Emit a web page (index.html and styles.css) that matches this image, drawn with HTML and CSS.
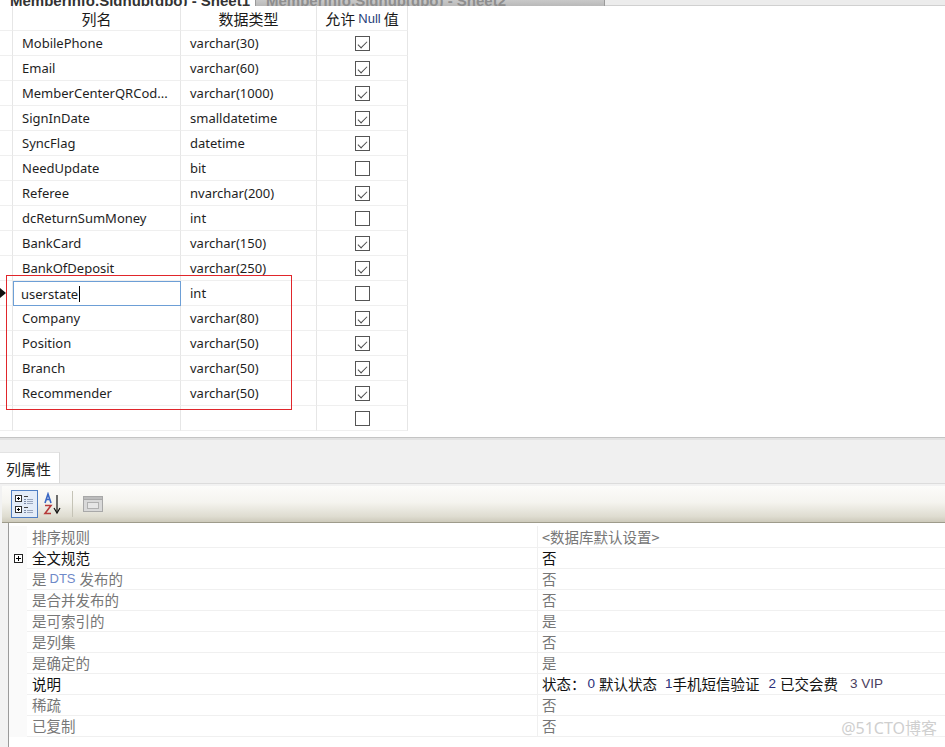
FILE: index.html
```html
<!DOCTYPE html>
<html lang="zh">
<head>
<meta charset="utf-8">
<title>表设计器</title>
<link rel="stylesheet" href="styles.css">
</head>
<body>
<div class="page">
  <div class="tab-strip">
    <div class="doc-tab active"><span>MemberInfo.Signup(dbo) - Sheet1</span></div>
    <div class="doc-tab other"><span>MemberInfo.Signup(dbo) - Sheet2</span></div>
    <div class="strip-rest"></div>
  </div>

  <div class="designer">
    <div class="grid">
      <div class="sel head"></div><div class="hc">列名</div><div class="hc">数据类型</div><div class="hc">允许 <span class="lat">Null</span> 值</div>

      <div class="sel"></div><div class="c">MobilePhone</div><div class="c">varchar(30)</div><div class="cb"><span class="box on"></span></div>
      <div class="sel"></div><div class="c">Email</div><div class="c">varchar(60)</div><div class="cb"><span class="box on"></span></div>
      <div class="sel"></div><div class="c">MemberCenterQRCod...</div><div class="c">varchar(1000)</div><div class="cb"><span class="box on"></span></div>
      <div class="sel"></div><div class="c">SignInDate</div><div class="c">smalldatetime</div><div class="cb"><span class="box on"></span></div>
      <div class="sel"></div><div class="c">SyncFlag</div><div class="c">datetime</div><div class="cb"><span class="box on"></span></div>
      <div class="sel"></div><div class="c">NeedUpdate</div><div class="c">bit</div><div class="cb"><span class="box"></span></div>
      <div class="sel"></div><div class="c">Referee</div><div class="c">nvarchar(200)</div><div class="cb"><span class="box on"></span></div>
      <div class="sel"></div><div class="c">dcReturnSumMoney</div><div class="c">int</div><div class="cb"><span class="box"></span></div>
      <div class="sel"></div><div class="c">BankCard</div><div class="c">varchar(150)</div><div class="cb"><span class="box on"></span></div>
      <div class="sel"></div><div class="c">BankOfDeposit</div><div class="c">varchar(250)</div><div class="cb"><span class="box on"></span></div>
      <div class="sel cur"><span class="arrow"></span></div><div class="c edit"><span>userstate</span><span class="caret"></span></div><div class="c">int</div><div class="cb"><span class="box"></span></div>
      <div class="sel"></div><div class="c">Company</div><div class="c">varchar(80)</div><div class="cb"><span class="box on"></span></div>
      <div class="sel"></div><div class="c">Position</div><div class="c">varchar(50)</div><div class="cb"><span class="box on"></span></div>
      <div class="sel"></div><div class="c">Branch</div><div class="c">varchar(50)</div><div class="cb"><span class="box on"></span></div>
      <div class="sel"></div><div class="c">Recommender</div><div class="c">varchar(50)</div><div class="cb"><span class="box on"></span></div>
      <div class="sel"></div><div class="c"></div><div class="c"></div><div class="cb"><span class="box"></span></div>
    </div>
    <div class="highlight"></div>
  </div>

  <div class="lower">
    <div class="splitter"></div>
    <div class="tabs"><div class="ptab">列属性</div></div>
    <div class="panel">
      <div class="toolbar">
        <div class="tb-btn pressed">
          <svg width="22" height="22" viewBox="0 0 22 22">
            <rect x="1.5" y="2.5" width="6" height="6" fill="#fff" stroke="#333"/>
            <rect x="3" y="5" width="3" height="1" fill="#000"/><rect x="4" y="4" width="1" height="3" fill="#000"/>
            <rect x="1.5" y="13.5" width="6" height="6" fill="#fff" stroke="#333"/>
            <rect x="3" y="16" width="3" height="1" fill="#000"/><rect x="4" y="15" width="1" height="3" fill="#000"/>
            <rect x="10" y="3" width="4" height="1" fill="#444"/>
            <rect x="10" y="6" width="2" height="1" fill="#7a8aa8"/><rect x="13" y="6" width="6" height="1" fill="#9aa6bd"/>
            <rect x="10" y="8" width="2" height="1" fill="#7a8aa8"/><rect x="13" y="8" width="6" height="1" fill="#9aa6bd"/>
            <rect x="10" y="10" width="2" height="1" fill="#7a8aa8"/><rect x="13" y="10" width="6" height="1" fill="#9aa6bd"/>
            <rect x="10" y="14" width="4" height="1" fill="#444"/>
            <rect x="10" y="17" width="2" height="1" fill="#7a8aa8"/><rect x="13" y="17" width="6" height="1" fill="#9aa6bd"/>
            <rect x="10" y="19" width="2" height="1" fill="#7a8aa8"/><rect x="13" y="19" width="6" height="1" fill="#9aa6bd"/>
          </svg>
        </div>
        <div class="tb-btn">
          <svg width="22" height="24" viewBox="0 0 22 24">
            <path d="M2 11 L5 2 L8 11 M3.2 7.5 H6.8" fill="none" stroke="#3a67c4" stroke-width="1.6"/>
            <path d="M2 13.5 H8 L2 21.5 H8" fill="none" stroke="#b63a3a" stroke-width="1.6"/>
            <path d="M14 3 V20" stroke="#111" stroke-width="1.2"/>
            <path d="M11 16 L14 21 L17 16" fill="none" stroke="#111" stroke-width="1.2"/>
          </svg>
        </div>
        <div class="tb-sep"></div>
        <div class="tb-btn dis">
          <svg width="22" height="22" viewBox="0 0 22 22">
            <rect x="1.5" y="3.5" width="19" height="15" fill="#d9d9d9" stroke="#a8a8a8"/>
            <rect x="1.5" y="3.5" width="19" height="3" fill="#bcbcbc" stroke="#a8a8a8"/>
            <rect x="5.5" y="9.5" width="11" height="6" fill="#e6e6e6" stroke="#b0b0b0"/>
          </svg>
        </div>
      </div>
      <div class="pgrid">
        <div class="prow"><div class="gut"></div><div class="pn ro">排序规则</div><div class="pv ro">&lt;数据库默认设置&gt;</div></div>
        <div class="prow"><div class="gut"><span class="plus"></span></div><div class="pn">全文规范</div><div class="pv">否</div></div>
        <div class="prow"><div class="gut"></div><div class="pn ro">是 <span class="lat dts">DTS</span> 发布的</div><div class="pv ro">否</div></div>
        <div class="prow"><div class="gut"></div><div class="pn ro">是合并发布的</div><div class="pv ro">否</div></div>
        <div class="prow"><div class="gut"></div><div class="pn ro">是可索引的</div><div class="pv ro">是</div></div>
        <div class="prow"><div class="gut"></div><div class="pn ro">是列集</div><div class="pv ro">否</div></div>
        <div class="prow"><div class="gut"></div><div class="pn ro">是确定的</div><div class="pv ro">是</div></div>
        <div class="prow"><div class="gut"></div><div class="pn">说明</div><div class="pv desc">状态：<span class="n0">0</span>默认状态<span class="n1">1</span>手机短信验证<span class="n2">2</span>已交会费<span class="n3">3 VIP</span></div></div>
        <div class="prow"><div class="gut"></div><div class="pn ro">稀疏</div><div class="pv ro">否</div></div>
        <div class="prow"><div class="gut"></div><div class="pn ro">已复制</div><div class="pv ro">否</div></div>
      </div>
    </div>
    <div class="watermark">@51CTO博客</div>
  </div>
</div>
</body>
</html>
```
FILE: styles.css
```css
html, body {
  margin: 0;
  padding: 0;
  background: #ffffff;
}
body {
  font-family: "Noto Sans", "Noto Sans CJK SC", sans-serif;
  color: #1e1e1e;
}
.page {
  width: 945px;
  height: 747px;
  overflow: hidden;
  position: relative;
}

/* top document tab strip (cut off) */
.tab-strip {
  height: 6px;
  display: flex;
  overflow: hidden;
  background: #ececec;
}
.doc-tab {
  display: flex;
  align-items: flex-end;
  overflow: hidden;
  font-family: "Liberation Sans", "Noto Sans CJK SC", sans-serif;
  font-weight: bold;
  font-size: 15px;
  line-height: 10px;
  white-space: nowrap;
}
.doc-tab span { display: block; height: 10px; padding-left: 10px; }
.doc-tab.active {
  width: 255px;
  background: #ffffff;
  color: #333;
}
.doc-tab.other {
  width: 350px;
  background: linear-gradient(#c9c9c9, #b9b9b9);
  color: #8e8e8e;
  border-left: 1px solid #9a9a9a;
  border-right: 1px solid #9a9a9a;
  box-sizing: border-box;
}
.strip-rest { flex: 1; border-bottom: 1px solid #d0d0d0; }

/* designer grid */
.designer {
  height: 425px;
  position: relative;
  background: #fff;
}
.grid {
  display: grid;
  grid-template-columns: 13px 168px 136px 91px;
  grid-auto-rows: 25px;
  width: 408px;
}
.grid > div {
  box-sizing: border-box;
  border-right: 1px solid #e6e6e6;
  border-bottom: 1px solid #efefef;
  display: flex;
  align-items: center;
}
.hc {
  justify-content: center;
  font-size: 15px;
  color: #1a1a1a;
  font-family: "Noto Sans CJK SC", sans-serif;
  font-weight: 400;
}
.lat {
  font-family: "Liberation Sans", "Noto Sans", sans-serif;
  font-size: 13px;
  color: #2a3f7a;
  margin: 0 3px;
}
.c {
  padding-left: 9px;
  font-family: "Noto Sans", "Liberation Sans", sans-serif;
  font-size: 13px;
  color: #1e1e1e;
  white-space: nowrap;
  overflow: hidden;
}
.c.edit {
  border: 1px solid #6d9fd6 !important;
  padding-left: 7px;
  background: #fff;
}
.caret {
  display: inline-block;
  width: 1px;
  height: 16px;
  background: #000;
  margin-left: 1px;
}
.cb { justify-content: center; }
.sel { position: relative; }
.arrow {
  width: 0;
  height: 0;
  border-top: 5px solid transparent;
  border-bottom: 5px solid transparent;
  border-left: 6px solid #111;
}
.box {
  width: 15px;
  height: 15px;
  box-sizing: border-box;
  border: 1px solid #555;
  background: #fff;
  position: relative;
  margin-left: 1px;
}
.box.on::after {
  content: "";
  position: absolute;
  left: 2px;
  top: 1px;
  width: 8px;
  height: 4px;
  border-left: 1.5px solid #4a4a4a;
  border-bottom: 1.5px solid #4a4a4a;
  transform: translate(0px, 3px) rotate(-45deg);
  transform-origin: center;
}
.highlight {
  position: absolute;
  left: 6px;
  top: 269px;
  width: 286px;
  height: 135px;
  box-sizing: border-box;
  border: 1px solid #e0262b;
  pointer-events: none;
}

/* lower pane */
.lower {
  height: 316px;
  background: #f0f0f0;
  position: relative;
}
.splitter {
  height: 6px;
  background: #fff;
  border-bottom: 1px solid #c4c4c4;
  box-shadow: 0 2px 0 #e2e2e2;
}
.tabs {
  padding-top: 14px;
  height: 31px;
  display: flex;
}
.ptab {
  width: 60px;
  box-sizing: border-box;
  background: #fff;
  border-right: 1px solid #d9d9d9;
  border-top: 1px solid #e3e3e3;
  font-family: "Noto Sans CJK SC", sans-serif;
  font-size: 15px;
  color: #222;
  padding-left: 6px;
  display: flex;
  align-items: center;
}
.panel {
  background: #f2f2f2;
  border-top: 1px solid #dcdcdc;
  padding: 2px 0 0 2px;
}
.toolbar {
  height: 36px;
  display: flex;
  align-items: center;
  gap: 2px;
  padding-left: 9px;
  background: linear-gradient(#fcfcfa 0%, #f5f4ef 45%, #dedcd0 85%, #cdcabb 100%);
  border-bottom: 1px solid #9e9b8b;
}
.tb-btn {
  width: 27px;
  height: 28px;
  box-sizing: border-box;
  display: flex;
  align-items: center;
  justify-content: center;
}
.tb-btn.pressed {
  border: 1px solid #4f7ec2;
  background: #e3ecf8;
}
.tb-sep {
  width: 1px;
  height: 26px;
  background: #c5c3b6;
  margin: 0 4px 0 3px;
}
.pgrid {
  margin-left: 6px;
  background: #fff;
  border-left: 1px solid #9a9a9a;
  height: 230px;
  padding-top: 3px;
}
.prow {
  display: grid;
  grid-template-columns: 18px 511px 1fr;
  height: 21px;
  box-sizing: border-box;
}
.gut {
  background: #fafafa;
  display: flex;
  align-items: center;
  justify-content: center;
}
.plus {
  width: 9px;
  height: 9px;
  box-sizing: border-box;
  border: 1px solid #222;
  position: relative;
  background: #fff;
}
.plus::before {
  content: "";
  position: absolute;
  left: 1px; top: 3px; width: 5px; height: 1px; background: #000;
}
.plus::after {
  content: "";
  position: absolute;
  left: 3px; top: 1px; width: 1px; height: 5px; background: #000;
}
.pn, .pv {
  border-bottom: 1px solid #f0f0f0;
  font-family: "Noto Sans CJK SC", sans-serif;
  font-size: 14.5px;
  color: #111;
  display: flex;
  align-items: center;
  white-space: nowrap;
}
.pn { padding-left: 5px; border-right: 1px solid #f0f0f0; }
.pv { padding-left: 4px; }
.ro { color: #777; }
.dts { color: #6f89c8; font-size: 13px; margin: 0 4px 0 3px; }
.n0, .n1, .n2, .n3 {
  color: #2a2f7a;
  font-family: "Liberation Sans", sans-serif;
  font-size: 13.5px;
}
.n0 { margin: 0 4px 0 2px; }
.n1 { margin-left: 8px; }
.n2 { margin: 0 4px 0 9px; }
.n3 { margin-left: 12px; color: #4a4060; }
.watermark {
  position: absolute;
  right: 8px;
  bottom: 8px;
  font-family: "Noto Sans", "Noto Sans CJK SC", sans-serif;
  font-size: 16px;
  color: #cfcfcf;
}
```
